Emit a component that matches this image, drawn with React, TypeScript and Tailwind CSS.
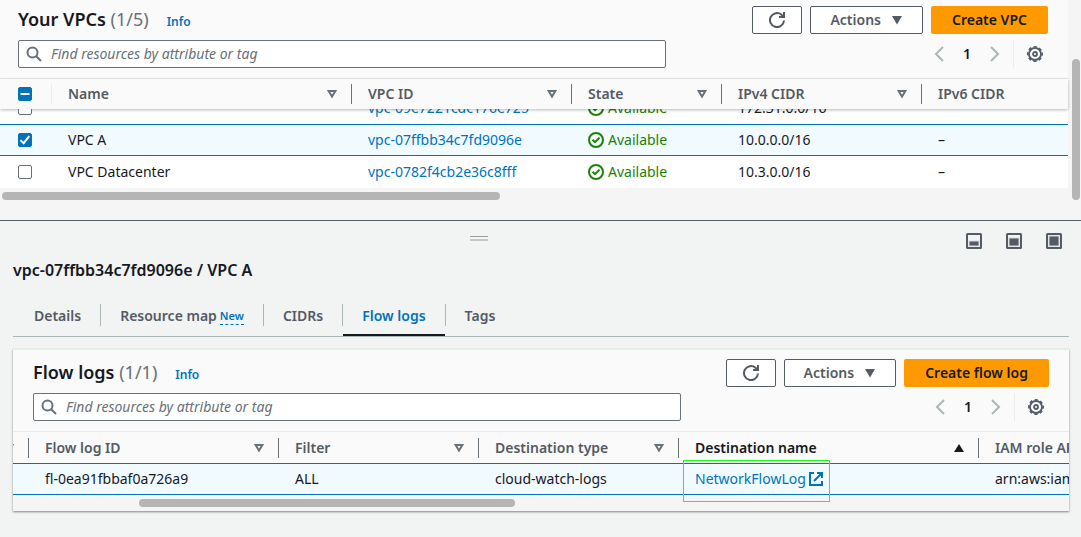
import { useState, type ReactNode } from 'react';

function SearchIcon() {
  return (
    <svg viewBox="0 0 16 16" className="pointer-events-none h-4 w-4 shrink-0" fill="none" stroke="#687078" strokeWidth="2" aria-hidden="true">
      <circle cx="6.5" cy="6.5" r="5" />
      <path d="M10.2 10.2 15 15" />
    </svg>
  );
}

function RefreshIcon() {
  return (
    <svg viewBox="0 0 16 16" className="h-4 w-4" fill="none" stroke="#545b64" strokeWidth="2" aria-hidden="true">
      <path d="M15 8.5a7 7 0 1 1-2.5-5.8L15 5" />
      <path d="M10 5h5V0" />
    </svg>
  );
}

function GearIcon() {
  return (
    <svg viewBox="0 0 16 16" className="h-4 w-4" fill="none" stroke="#545b64" aria-hidden="true">
      <circle cx="8" cy="8" r="6" strokeWidth="1.8" />
      <circle cx="8" cy="8" r="7.2" strokeWidth="1.6" strokeDasharray="3.2 2.455" strokeDashoffset="1.6" />
      <circle cx="8" cy="8" r="2" strokeWidth="1.8" />
    </svg>
  );
}

function Chevron({ dir }: { dir: 'left' | 'right' }) {
  return (
    <svg viewBox="0 0 16 16" className="h-4 w-4" fill="none" stroke="#aab7b8" strokeWidth="2" aria-hidden="true">
      <path d={dir === 'left' ? 'M12 1 5 8l7 7' : 'M4 1l7 7-7 7'} />
    </svg>
  );
}

function SortIcon({ active = false }: { active?: boolean }) {
  return (
    <svg viewBox="0 0 10 10" className="h-[10px] w-[10px] shrink-0" aria-hidden="true">
      {active ? (
        <path d="M5 1 10 9H0z" fill="#16191f" />
      ) : (
        <path d="M1.6 2h6.8L5 7.6z" fill="none" stroke="#687078" strokeWidth="2" />
      )}
    </svg>
  );
}

function CheckCircle() {
  return (
    <svg viewBox="0 0 16 16" className="h-4 w-4 shrink-0" fill="none" stroke="#1d8102" strokeWidth="2" aria-hidden="true">
      <circle cx="8" cy="8" r="7" />
      <path d="m4.5 7.7 2.5 2.5 4.5-4.5" />
    </svg>
  );
}

function ExternalIcon() {
  return (
    <svg viewBox="0 0 16 16" className="h-4 w-4 shrink-0" fill="none" stroke="#0073bb" strokeWidth="2" aria-hidden="true">
      <path d="M14 10v4H2V2h4M9 2h5v5M6 10l8-8" />
    </svg>
  );
}

function PanelIcon({ top }: { top: number }) {
  return (
    <svg viewBox="0 0 16 16" className="h-4 w-4" aria-hidden="true">
      <rect x="1" y="1" width="14" height="14" rx="0.5" fill="none" stroke="#545b64" strokeWidth="2" />
      <rect x="3" y={top} width="10" height={13 - top} fill="#545b64" stroke="#d5d8d9" />
    </svg>
  );
}

function Checkbox({ label, checked = false, mixed = false }: { label: string; checked?: boolean; mixed?: boolean }) {
  const [on, setOn] = useState(checked);
  return (
    <label className="relative block h-[14px] w-[14px]">
      <input
        type="checkbox"
        aria-label={label}
        checked={on}
        onChange={(e) => setOn(e.target.checked)}
        className="block h-[14px] w-[14px] appearance-none rounded-xs border border-[#687078] bg-white checked:border-[#0073bb] checked:bg-[#0073bb]"
      />
      {on && (
        <svg viewBox="0 0 14 14" className="pointer-events-none absolute inset-0" fill="none" stroke="#fff" strokeWidth="2" aria-hidden="true">
          <path d={mixed ? 'M2.5 7h9' : 'M2.5 7.2 5.7 10.2 11.2 3.2'} />
        </svg>
      )}
    </label>
  );
}

const outline = 'flex h-7 items-center justify-center rounded-xs border border-[#545b64] bg-white font-semibold text-[#545b64]';

function TableToolbar({ title, count, action, id }: { title: string; count: string; action: string; id: string }) {
  return (
    <div className="flex flex-col gap-[6px]">
      <div className="flex items-start justify-between">
        <div className="flex items-baseline">
          <h2 className="text-lg leading-[26px] font-semibold text-[#16191f]">
            {title} <span className="font-normal text-[#687078]">({count})</span>
          </h2>
          <a href="#info" className="ml-[18px] text-xs font-semibold text-[#0073bb]">Info</a>
        </div>
        <div className="flex gap-2">
          <button type="button" aria-label="Refresh" className={`${outline} w-[50px]`}>
            <RefreshIcon />
          </button>
          <button type="button" className={`${outline} gap-[10px] px-[19px]`}>
            Actions
            <svg viewBox="0 0 12 10" className="h-[10px] w-3" aria-hidden="true">
              <path d="M1 1h10L6 9.5z" fill="#545b64" />
            </svg>
          </button>
          <button type="button" className="h-7 rounded-xs bg-[#ff9900] px-[21px] font-semibold text-[#16191f]">{action}</button>
        </div>
      </div>
      <div className="flex items-center justify-between">
        <div className="flex h-7 w-full max-w-[648px] items-center gap-[9px] rounded-xs border border-[#687078] bg-white px-[7px]">
          <SearchIcon />
          <input
            id={id}
            type="text"
            aria-label={`Search ${title}`}
            placeholder="Find resources by attribute or tag"
            className="min-w-0 flex-1 bg-transparent outline-none placeholder:text-[#687078] placeholder:italic"
          />
        </div>
        <div className="flex items-center pr-[5px]">
          <button type="button" aria-label="Previous page"><Chevron dir="left" /></button>
          <button type="button" className="w-10 text-center font-semibold text-[#16191f]">1</button>
          <button type="button" aria-label="Next page"><Chevron dir="right" /></button>
          <span className="ml-[10px] h-7 w-px bg-[#eaeded]" />
          <button type="button" aria-label="Preferences" className="ml-[13px]"><GearIcon /></button>
        </div>
      </div>
    </div>
  );
}

function HeadCell({ children, sort = 'none', last = false }: { children?: ReactNode; sort?: 'none' | 'active'; last?: boolean }) {
  return (
    <th scope="col" className={`p-0 text-left font-semibold ${sort === 'active' ? 'text-[#16191f]' : 'text-[#545b64]'}`}>
      <div className="flex h-[30px] items-center overflow-hidden">
        <span className="flex-1 pl-4">{children}</span>
        {!last && (
          <>
            <SortIcon active={sort === 'active'} />
            <span className="ml-[14px] h-5 w-px shrink-0 bg-[#687078]" />
          </>
        )}
      </div>
    </th>
  );
}

type Vpc = { name: string; id: string; cidr: string; selected?: boolean; partial?: boolean };

const vpcs: Vpc[] = [
  { name: '', id: 'vpc-09e7221cdc176e725', cidr: '172.31.0.0/16', partial: true },
  { name: 'VPC A', id: 'vpc-07ffbb34c7fd9096e', cidr: '10.0.0.0/16', selected: true },
  { name: 'VPC Datacenter', id: 'vpc-0782f4cb2e36c8fff', cidr: '10.3.0.0/16' },
];

function VpcRow({ vpc }: { vpc: Vpc }) {
  const cell = vpc.selected ? 'border-y border-[#0073bb] bg-[#f1faff] p-0' : 'bg-white p-0';
  const clip = vpc.partial ? 'flex h-[15px] flex-col justify-end overflow-hidden' : '';
  const line = vpc.selected ? 'flex h-[30px] shrink-0 items-center pl-4' : 'flex h-8 shrink-0 items-center pl-4';
  return (
    <tr>
      <td className={cell}>
        <div className={clip}>
          <div className={`${line} pl-[18px]`}><Checkbox label={`Select ${vpc.id}`} checked={vpc.selected} /></div>
        </div>
      </td>
      <td className={cell}><div className={clip}><div className={line}>{vpc.name}</div></div></td>
      <td className={cell}>
        <div className={clip}><div className={line}><a href="#vpc" className="text-[#0073bb]">{vpc.id}</a></div></div>
      </td>
      <td className={cell}>
        <div className={clip}><div className={`${line} gap-1 text-[#1d8102]`}><CheckCircle />Available</div></div>
      </td>
      <td className={cell}><div className={clip}><div className={line}>{vpc.cidr}</div></div></td>
      <td className={cell}><div className={clip}><div className={line}>{vpc.partial ? '' : '–'}</div></div></td>
    </tr>
  );
}

const tabs = ['Details', 'Resource map', 'CIDRs', 'Flow logs', 'Tags'];

export default function App() {
  const [tab, setTab] = useState('Flow logs');
  const logCell = 'border-y border-[#0073bb] bg-[#f1faff] p-0';
  return (
    <div className="flex min-h-screen flex-col overflow-hidden bg-[#f5f5f5] font-['Noto_Sans',sans-serif] text-sm text-[#16191f]">
      <section className="flex border-b border-[#545b64]">
        <div className="min-w-0 flex-1 pb-5">
          <div className="border-b border-[#eaeded] bg-[#fafafa] pt-[6px] pr-5 pb-[10px] pl-[18px]">
            <TableToolbar title="Your VPCs" count="1/5" action="Create VPC" id="vpc-search" />
          </div>
          <table className="w-full table-fixed border-separate border-spacing-0 whitespace-nowrap">
            <colgroup>
              <col className="w-[52px]" />
              <col className="w-[300px]" />
              <col className="w-[220px]" />
              <col className="w-[150px]" />
              <col className="w-[200px]" />
              <col />
            </colgroup>
            <thead className="relative bg-[#fafafa] shadow-[0_1px_3px_rgba(0,28,36,0.3)]">
              <tr>
                <th scope="col" className="p-0">
                  <div className="flex h-[30px] items-center justify-between pl-[18px]">
                    <Checkbox label="Select all VPCs" checked mixed />
                    <span className="h-5 w-px bg-[#eaeded]" />
                  </div>
                </th>
                <HeadCell>Name</HeadCell>
                <HeadCell>VPC ID</HeadCell>
                <HeadCell>State</HeadCell>
                <HeadCell>IPv4 CIDR</HeadCell>
                <HeadCell last>IPv6 CIDR</HeadCell>
              </tr>
            </thead>
            <tbody>
              {vpcs.map((v) => <VpcRow key={v.id} vpc={v} />)}
            </tbody>
          </table>
          <div className="mt-1 ml-[2px] h-2 w-[498px] rounded-full bg-[#b5b5b5]" />
        </div>
        <div className="flex w-[13px] justify-end pt-[59px] pr-px">
          <div className="h-[141px] w-2 rounded-full bg-[#b5b5b5]" />
        </div>
      </section>

      <section className="flex flex-1 flex-col bg-[#f2f3f3] pr-3 pl-[13px]">
        <div className="grid grid-cols-3 pt-3">
          <span />
          <div className="flex flex-col items-center gap-[2px] pt-[3px] pr-[124px]">
            <span className="h-px w-[18px] bg-[#9a9fa0]" />
            <span className="h-[2px] w-[18px] bg-[#c3c7c7]" />
          </div>
          <div className="flex justify-end gap-6 pr-[7px]">
            <button type="button" aria-label="Small panel"><PanelIcon top={8} /></button>
            <button type="button" aria-label="Medium panel"><PanelIcon top={5} /></button>
            <button type="button" aria-label="Full panel"><PanelIcon top={3} /></button>
          </div>
        </div>
        <h1 className="mt-[9px] text-base leading-6 font-semibold">vpc-07ffbb34c7fd9096e / VPC A</h1>

        <nav role="tablist" className="mt-[22px] flex border-b border-[#aab7b8] pl-[2px]">
          {tabs.map((t, i) => (
            <div key={t} className="flex items-start">
              <button
                type="button"
                role="tab"
                aria-selected={tab === t}
                onClick={() => setTab(t)}
                className={`flex h-8 items-start border-b-2 px-[19px] font-semibold ${tab === t ? 'border-[#16191f] text-[#0073bb]' : 'border-transparent text-[#545b64]'}`}
              >
                <span className="leading-6">{t}</span>
                {t === 'Resource map' && (
                  <span className="mt-1 ml-[3px] border-b border-dashed border-[#0073bb] text-[11px] leading-4 text-[#0073bb]">New</span>
                )}
              </button>
              {i < tabs.length - 1 && <span className="h-[22px] w-px bg-[#aab7b8]" />}
            </div>
          ))}
        </nav>

        <div className="mt-3 border-t border-[#eaeded] bg-[#f5f5f5] shadow-[0_1px_2px_rgba(0,28,36,0.5)]">
          <div className="border-b border-[#eaeded] bg-[#fafafa] px-5 pt-[9px] pb-[10px]">
            <TableToolbar title="Flow logs" count="1/1" action="Create flow log" id="log-search" />
          </div>
          <table className="w-full table-fixed border-separate border-spacing-0 whitespace-nowrap">
            <colgroup>
              <col className="w-4" />
              <col className="w-[250px]" />
              <col className="w-[200px]" />
              <col className="w-[200px]" />
              <col className="w-[300px]" />
              <col />
            </colgroup>
            <thead className="bg-[#fafafa]">
              <tr>
                <th scope="col" className="p-0" aria-label="Name">
                  <div className="flex h-[31px] items-center justify-end overflow-hidden">
                    <SortIcon />
                    <span className="ml-[14px] h-5 w-px shrink-0 bg-[#687078]" />
                  </div>
                </th>
                <HeadCell>Flow log ID</HeadCell>
                <HeadCell>Filter</HeadCell>
                <HeadCell>Destination type</HeadCell>
                <HeadCell sort="active">Destination name</HeadCell>
                <HeadCell last>IAM role ARN</HeadCell>
              </tr>
            </thead>
            <tbody>
              <tr>
                <td className={logCell} />
                <td className={logCell}><div className="flex h-[30px] items-center pl-4">fl-0ea91fbbaf0a726a9</div></td>
                <td className={logCell}><div className="pl-4">ALL</div></td>
                <td className={logCell}><div className="pl-4">cloud-watch-logs</div></td>
                <td className={`${logCell} relative`}>
                  <a href="#log" className="flex items-center gap-[2px] pl-4 text-[#0073bb]">NetworkFlowLog <ExternalIcon /></a>
                  <span className="pointer-events-none absolute -top-[4px] left-1 h-[42px] w-[147px] border border-[#1aff1a]" />
                </td>
                <td className={logCell}><div className="overflow-hidden pl-4">arn:aws:iam::</div></td>
              </tr>
            </tbody>
          </table>
          <div className="flex pt-1 pb-1">
            <div className="ml-[126px] h-2 w-[376px] rounded-full bg-[#b5b5b5]" />
          </div>
        </div>
      </section>
    </div>
  );
}
